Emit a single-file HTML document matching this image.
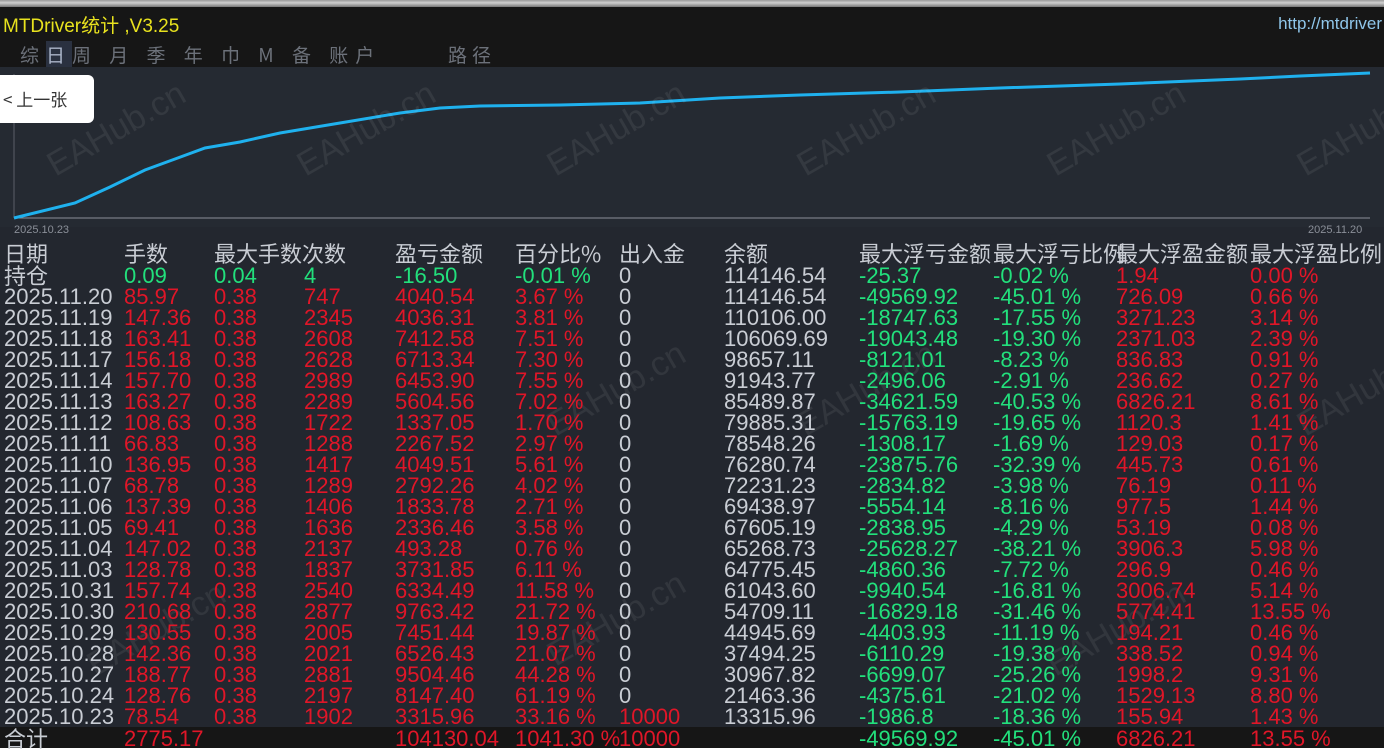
<!DOCTYPE html>
<html><head><meta charset="utf-8"><style>
*{margin:0;padding:0;box-sizing:border-box}
body{width:1390px;height:748px;overflow:hidden;background:#fff;position:relative;font-family:"Liberation Sans Narrow","Liberation Sans","Noto Sans CJK SC",sans-serif}
#frame{position:absolute;left:0;top:0;width:1384px;height:748px;background:#23272f}
#topb{position:absolute;left:0;top:0;width:1384px;height:7px;background:linear-gradient(#9a9a9a,#cfcfcf 40%,#777)}
#title{position:absolute;left:0;top:7px;width:1384px;height:60px;background:#161616}
.t1{position:absolute;left:3px;top:4px;color:#e8e21e;font-size:19px;font-family:"Liberation Sans","Noto Sans CJK SC",sans-serif}
.url{position:absolute;right:2px;top:7px;color:#8fc6ea;font-size:17px;font-family:"Liberation Sans",sans-serif}
.menu{position:absolute;top:34px;color:#6c717a;font-size:19px;font-family:"Noto Sans CJK SC",sans-serif}
#chart{position:absolute;left:0;top:67px;width:1384px;height:160px;background:#252a32}
.btn{position:absolute;left:0;top:75px;width:94px;height:48px;background:#fff;border-radius:0 6px 6px 0;font-size:17px;color:#333;line-height:48px;padding-left:3px;font-family:"Noto Sans CJK SC",sans-serif}
.row{position:absolute;left:0;width:1384px;height:21px;font-size:22px;line-height:21px;white-space:nowrap}
.row span{position:absolute;top:0}
.c0{left:4px;color:#c9cdd4}.c1{left:124px}.c2{left:214px}.c3{left:304px}.c4{left:395px}.c5{left:515px}.c6{left:619px;color:#c9cdd4}.c7{left:724px;color:#c9cdd4}.c8{left:859px}.c9{left:993px}.c10{left:1116px}.c11{left:1250px}
.r span.c1,.r span.c2,.r span.c3,.r span.c4,.r span.c5,.r span.c10,.r span.c11{color:#e01628}
.r span.c8,.r span.c9{color:#22e07c}
.hd span{color:#c9cdd4;font-family:"Noto Sans CJK SC",sans-serif;font-size:22px}
.wm{position:absolute;color:rgba(255,255,255,0.07);font-size:34px;font-family:"Liberation Sans",sans-serif;transform:rotate(-30deg);white-space:nowrap}
#tot{position:absolute;left:0;top:727px;width:1384px;height:21px;background:#161616}
</style></head><body>
<div id="frame"></div>
<div id="topb"></div>
<div id="title">
<div class="t1">MTDriver统计 ,V3.25</div>
<div class="url">http://mtdriver</div>
<div class="menu" style="left:20px;letter-spacing:7px">综<span style="background:#2a3140;color:#aab4c8">日</span>周 月 季 年 巾 M 备 账户</div>
<div class="menu" style="left:448px;letter-spacing:5px">路径</div>
</div>
<div id="chart"></div>
<svg style="position:absolute;left:0;top:67px" width="1384" height="170">
<line x1="14" y1="7" x2="14" y2="151" stroke="#5a5f68"/>
<line x1="14" y1="151" x2="1370" y2="151" stroke="#8a8f98"/>
<polyline fill="none" stroke="#1fb1ee" stroke-width="3" points="14,151 75,136 110,120 145,103 175,92 205,81 240,75 280,66 340,56 400,46 440,41 480,39 560,38 640,36 720,31 800,28 900,25 1000,21 1120,17 1240,12 1300,9 1370,6"/>
<text x="14" y="166" fill="#8a8f98" font-size="11" font-family="Liberation Sans Narrow,Liberation Sans,sans-serif">2025.10.23</text>
<text x="1308" y="166" fill="#8a8f98" font-size="11" font-family="Liberation Sans Narrow,Liberation Sans,sans-serif">2025.11.20</text>
</svg>
<div class="wm" style="left:40px;top:110px">EAHub.cn</div>
<div class="wm" style="left:290px;top:110px">EAHub.cn</div>
<div class="wm" style="left:540px;top:110px">EAHub.cn</div>
<div class="wm" style="left:790px;top:110px">EAHub.cn</div>
<div class="wm" style="left:1040px;top:110px">EAHub.cn</div>
<div class="wm" style="left:1290px;top:110px">EAHub.cn</div>
<div class="wm" style="left:540px;top:370px">EAHub.cn</div>
<div class="wm" style="left:790px;top:370px">EAHub.cn</div>
<div class="wm" style="left:1290px;top:370px">EAHub.cn</div>
<div class="wm" style="left:80px;top:610px">EAHub.cn</div>
<div class="wm" style="left:540px;top:600px">EAHub.cn</div>
<div class="wm" style="left:1040px;top:610px">EAHub.cn</div>
<div class="btn">&lt; 上一张</div>
<div id="tot"></div>
<div class="row hd" style="top:243px"><span class="c0">日期</span><span class="c1">手数</span><span class="c2">最大手数次数</span><span class="c4">盈亏金额</span><span class="c5">百分比%</span><span class="c6">出入金</span><span class="c7">余额</span><span class="c8">最大浮亏金额</span><span class="c9">最大浮亏比例</span><span class="c10">最大浮盈金额</span><span class="c11">最大浮盈比例</span></div>
<div class="row" style="top:265px"><span class="c0" style="font-family:'Noto Sans CJK SC',sans-serif">持仓</span><span class="c1" style="color:#22e07c">0.09</span><span class="c2" style="color:#22e07c">0.04</span><span class="c3" style="color:#22e07c">4</span><span class="c4" style="color:#22e07c">-16.50</span><span class="c5" style="color:#22e07c">-0.01 %</span><span class="c6">0</span><span class="c7">114146.54</span><span class="c8" style="color:#22e07c">-25.37</span><span class="c9" style="color:#22e07c">-0.02 %</span><span class="c10" style="color:#e01628">1.94</span><span class="c11" style="color:#e01628">0.00 %</span></div>
<div class="row r" style="top:286px"><span class="c0">2025.11.20</span><span class="c1">85.97</span><span class="c2">0.38</span><span class="c3">747</span><span class="c4">4040.54</span><span class="c5">3.67 %</span><span class="c6">0</span><span class="c7">114146.54</span><span class="c8">-49569.92</span><span class="c9">-45.01 %</span><span class="c10">726.09</span><span class="c11">0.66 %</span></div>
<div class="row r" style="top:307px"><span class="c0">2025.11.19</span><span class="c1">147.36</span><span class="c2">0.38</span><span class="c3">2345</span><span class="c4">4036.31</span><span class="c5">3.81 %</span><span class="c6">0</span><span class="c7">110106.00</span><span class="c8">-18747.63</span><span class="c9">-17.55 %</span><span class="c10">3271.23</span><span class="c11">3.14 %</span></div>
<div class="row r" style="top:328px"><span class="c0">2025.11.18</span><span class="c1">163.41</span><span class="c2">0.38</span><span class="c3">2608</span><span class="c4">7412.58</span><span class="c5">7.51 %</span><span class="c6">0</span><span class="c7">106069.69</span><span class="c8">-19043.48</span><span class="c9">-19.30 %</span><span class="c10">2371.03</span><span class="c11">2.39 %</span></div>
<div class="row r" style="top:349px"><span class="c0">2025.11.17</span><span class="c1">156.18</span><span class="c2">0.38</span><span class="c3">2628</span><span class="c4">6713.34</span><span class="c5">7.30 %</span><span class="c6">0</span><span class="c7">98657.11</span><span class="c8">-8121.01</span><span class="c9">-8.23 %</span><span class="c10">836.83</span><span class="c11">0.91 %</span></div>
<div class="row r" style="top:370px"><span class="c0">2025.11.14</span><span class="c1">157.70</span><span class="c2">0.38</span><span class="c3">2989</span><span class="c4">6453.90</span><span class="c5">7.55 %</span><span class="c6">0</span><span class="c7">91943.77</span><span class="c8">-2496.06</span><span class="c9">-2.91 %</span><span class="c10">236.62</span><span class="c11">0.27 %</span></div>
<div class="row r" style="top:391px"><span class="c0">2025.11.13</span><span class="c1">163.27</span><span class="c2">0.38</span><span class="c3">2289</span><span class="c4">5604.56</span><span class="c5">7.02 %</span><span class="c6">0</span><span class="c7">85489.87</span><span class="c8">-34621.59</span><span class="c9">-40.53 %</span><span class="c10">6826.21</span><span class="c11">8.61 %</span></div>
<div class="row r" style="top:412px"><span class="c0">2025.11.12</span><span class="c1">108.63</span><span class="c2">0.38</span><span class="c3">1722</span><span class="c4">1337.05</span><span class="c5">1.70 %</span><span class="c6">0</span><span class="c7">79885.31</span><span class="c8">-15763.19</span><span class="c9">-19.65 %</span><span class="c10">1120.3</span><span class="c11">1.41 %</span></div>
<div class="row r" style="top:433px"><span class="c0">2025.11.11</span><span class="c1">66.83</span><span class="c2">0.38</span><span class="c3">1288</span><span class="c4">2267.52</span><span class="c5">2.97 %</span><span class="c6">0</span><span class="c7">78548.26</span><span class="c8">-1308.17</span><span class="c9">-1.69 %</span><span class="c10">129.03</span><span class="c11">0.17 %</span></div>
<div class="row r" style="top:454px"><span class="c0">2025.11.10</span><span class="c1">136.95</span><span class="c2">0.38</span><span class="c3">1417</span><span class="c4">4049.51</span><span class="c5">5.61 %</span><span class="c6">0</span><span class="c7">76280.74</span><span class="c8">-23875.76</span><span class="c9">-32.39 %</span><span class="c10">445.73</span><span class="c11">0.61 %</span></div>
<div class="row r" style="top:475px"><span class="c0">2025.11.07</span><span class="c1">68.78</span><span class="c2">0.38</span><span class="c3">1289</span><span class="c4">2792.26</span><span class="c5">4.02 %</span><span class="c6">0</span><span class="c7">72231.23</span><span class="c8">-2834.82</span><span class="c9">-3.98 %</span><span class="c10">76.19</span><span class="c11">0.11 %</span></div>
<div class="row r" style="top:496px"><span class="c0">2025.11.06</span><span class="c1">137.39</span><span class="c2">0.38</span><span class="c3">1406</span><span class="c4">1833.78</span><span class="c5">2.71 %</span><span class="c6">0</span><span class="c7">69438.97</span><span class="c8">-5554.14</span><span class="c9">-8.16 %</span><span class="c10">977.5</span><span class="c11">1.44 %</span></div>
<div class="row r" style="top:517px"><span class="c0">2025.11.05</span><span class="c1">69.41</span><span class="c2">0.38</span><span class="c3">1636</span><span class="c4">2336.46</span><span class="c5">3.58 %</span><span class="c6">0</span><span class="c7">67605.19</span><span class="c8">-2838.95</span><span class="c9">-4.29 %</span><span class="c10">53.19</span><span class="c11">0.08 %</span></div>
<div class="row r" style="top:538px"><span class="c0">2025.11.04</span><span class="c1">147.02</span><span class="c2">0.38</span><span class="c3">2137</span><span class="c4">493.28</span><span class="c5">0.76 %</span><span class="c6">0</span><span class="c7">65268.73</span><span class="c8">-25628.27</span><span class="c9">-38.21 %</span><span class="c10">3906.3</span><span class="c11">5.98 %</span></div>
<div class="row r" style="top:559px"><span class="c0">2025.11.03</span><span class="c1">128.78</span><span class="c2">0.38</span><span class="c3">1837</span><span class="c4">3731.85</span><span class="c5">6.11 %</span><span class="c6">0</span><span class="c7">64775.45</span><span class="c8">-4860.36</span><span class="c9">-7.72 %</span><span class="c10">296.9</span><span class="c11">0.46 %</span></div>
<div class="row r" style="top:580px"><span class="c0">2025.10.31</span><span class="c1">157.74</span><span class="c2">0.38</span><span class="c3">2540</span><span class="c4">6334.49</span><span class="c5">11.58 %</span><span class="c6">0</span><span class="c7">61043.60</span><span class="c8">-9940.54</span><span class="c9">-16.81 %</span><span class="c10">3006.74</span><span class="c11">5.14 %</span></div>
<div class="row r" style="top:601px"><span class="c0">2025.10.30</span><span class="c1">210.68</span><span class="c2">0.38</span><span class="c3">2877</span><span class="c4">9763.42</span><span class="c5">21.72 %</span><span class="c6">0</span><span class="c7">54709.11</span><span class="c8">-16829.18</span><span class="c9">-31.46 %</span><span class="c10">5774.41</span><span class="c11">13.55 %</span></div>
<div class="row r" style="top:622px"><span class="c0">2025.10.29</span><span class="c1">130.55</span><span class="c2">0.38</span><span class="c3">2005</span><span class="c4">7451.44</span><span class="c5">19.87 %</span><span class="c6">0</span><span class="c7">44945.69</span><span class="c8">-4403.93</span><span class="c9">-11.19 %</span><span class="c10">194.21</span><span class="c11">0.46 %</span></div>
<div class="row r" style="top:643px"><span class="c0">2025.10.28</span><span class="c1">142.36</span><span class="c2">0.38</span><span class="c3">2021</span><span class="c4">6526.43</span><span class="c5">21.07 %</span><span class="c6">0</span><span class="c7">37494.25</span><span class="c8">-6110.29</span><span class="c9">-19.38 %</span><span class="c10">338.52</span><span class="c11">0.94 %</span></div>
<div class="row r" style="top:664px"><span class="c0">2025.10.27</span><span class="c1">188.77</span><span class="c2">0.38</span><span class="c3">2881</span><span class="c4">9504.46</span><span class="c5">44.28 %</span><span class="c6">0</span><span class="c7">30967.82</span><span class="c8">-6699.07</span><span class="c9">-25.26 %</span><span class="c10">1998.2</span><span class="c11">9.31 %</span></div>
<div class="row r" style="top:685px"><span class="c0">2025.10.24</span><span class="c1">128.76</span><span class="c2">0.38</span><span class="c3">2197</span><span class="c4">8147.40</span><span class="c5">61.19 %</span><span class="c6">0</span><span class="c7">21463.36</span><span class="c8">-4375.61</span><span class="c9">-21.02 %</span><span class="c10">1529.13</span><span class="c11">8.80 %</span></div>
<div class="row r" style="top:706px"><span class="c0">2025.10.23</span><span class="c1">78.54</span><span class="c2">0.38</span><span class="c3">1902</span><span class="c4">3315.96</span><span class="c5">33.16 %</span><span class="c6" style="color:#e01628">10000</span><span class="c7">13315.96</span><span class="c8">-1986.8</span><span class="c9">-18.36 %</span><span class="c10">155.94</span><span class="c11">1.43 %</span></div>
<div class="row r" style="top:728px"><span class="c0" style="font-family:'Noto Sans CJK SC',sans-serif">合计</span><span class="c1">2775.17</span><span class="c4">104130.04</span><span class="c5">1041.30 %</span><span class="c6" style="color:#e01628">10000</span><span class="c8">-49569.92</span><span class="c9">-45.01 %</span><span class="c10">6826.21</span><span class="c11">13.55 %</span></div>
</body></html>
